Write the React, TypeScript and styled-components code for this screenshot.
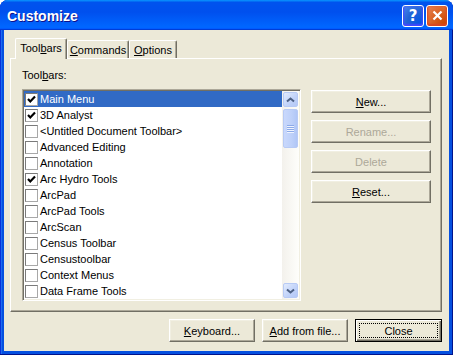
import { createGlobalStyle, styled } from "styled-components";

const Global = createGlobalStyle`
  html, body {
    margin: 0;
    padding: 0;
    background: #ffffff;
  }
  body {
    font-family: "Liberation Sans", Arial, sans-serif;
    font-size: 11px;
    color: #000;
  }
`;

const Window = styled.div`
  width: 453px;
  height: 355px;
  box-sizing: border-box;
  display: flex;
  flex-direction: column;
  background: #0550e0;
  border-radius: 8px 8px 0 0;
  box-shadow: inset -1px -1px #00138c, inset 1px 0 #0831d9, inset 2px 0 #1d6bf0;
  overflow: hidden;
`;

const TitleBar = styled.div`
  height: 30px;
  flex: none;
  display: flex;
  align-items: center;
  justify-content: space-between;
  padding: 0 5px 0 7px;
  background: linear-gradient(
    180deg,
    #0997ff,
    #0053ee 8%,
    #0050ee 40%,
    #0066ff 88%,
    #0066ff 93%,
    #005bff 95%,
    #003dd7 96%,
    #003dd7
  );
`;

const Title = styled.div`
  font-family: "Liberation Sans", Arial, sans-serif;
  font-weight: bold;
  font-size: 14px;
  color: #fff;
  text-shadow: 1px 1px #0f1089;
  padding-top: 1px;
`;

const Caps = styled.div`
  display: flex;
  gap: 2px;
  padding-top: 1px;
`;

const CapButton = styled.div<{ $kind: "help" | "close" }>`
  width: 22px;
  height: 22px;
  box-sizing: border-box;
  border: 1px solid #fff;
  border-radius: 3px;
  display: flex;
  align-items: center;
  justify-content: center;
  color: #fff;
  font-family: "DejaVu Sans", sans-serif;
  font-weight: bold;
  font-size: 15px;
  background: ${(p) =>
    p.$kind === "close"
      ? "radial-gradient(circle at 90% 90%, #cc4600 0%, #dc6527 55%, #e5845a 100%)"
      : "radial-gradient(circle at 90% 90%, #0054e9 0%, #2263d5 55%, #4f87f0 100%)"};
  box-shadow: ${(p) =>
    p.$kind === "close" ? "inset 0 -1px 2px 1px #da4624" : "inset 0 -1px 2px 1px #4646ff"};
`;

const Client = styled.div`
  flex: 1;
  margin: 0 4px 4px 4px;
  background: #ece9d8;
  display: flex;
  flex-direction: column;
  padding: 8px 7px 0 6px;
`;

const TabStrip = styled.div`
  display: flex;
  align-items: flex-end;
  height: 20px;
  padding-left: 5px;
  position: relative;
  z-index: 1;
`;

const Tab = styled.div<{ $active?: boolean; $width: number }>`
  box-sizing: border-box;
  width: ${(p) => p.$width}px;
  height: ${(p) => (p.$active ? "21px" : "18px")};
  margin-bottom: ${(p) => (p.$active ? "-1px" : "0")};
  padding-top: 2px;
  text-align: center;
  background: #ece9d8;
  border-top: 1px solid #fff;
  border-left: 1px solid #fff;
  border-right: 1px solid #716f64;
  border-radius: 2px 2px 0 0;
  box-shadow: inset -1px 0 #aca899;
  line-height: 15px;
  white-space: nowrap;
`;

const Panel = styled.div`
  box-sizing: border-box;
  height: 254px;
  border: 1px solid;
  border-color: #fff #716f64 #716f64 #fff;
  box-shadow: inset -1px -1px #aca899;
  padding: 10px 10px 0 11px;
  display: flex;
  flex-direction: column;
`;

const Label = styled.div`
  line-height: 13px;
  height: 13px;
  margin-bottom: 7px;
`;

const PanelBody = styled.div`
  display: flex;
  gap: 10px;
`;

const ListBox = styled.div`
  box-sizing: border-box;
  width: 279px;
  height: 212px;
  border: 1px solid;
  border-color: #aca899 #fff #fff #aca899;
  box-shadow: inset 1px 1px #716f64, inset -1px -1px #f1efe2;
  padding: 1px;
  display: flex;
  background: #fff;
`;

const Rows = styled.div`
  flex: 1;
  display: flex;
  flex-direction: column;
  background: #fff;
`;

const Row = styled.div<{ $selected?: boolean }>`
  height: 16px;
  display: flex;
  align-items: center;
  gap: 2px;
  padding-left: 1px;
  background: ${(p) => (p.$selected ? "#316ac5" : "transparent")};
  color: ${(p) => (p.$selected ? "#fff" : "#000")};
  white-space: nowrap;
`;

const Check = styled.div`
  width: 13px;
  height: 13px;
  box-sizing: border-box;
  border: 1px solid #7a7a7a;
  border-right-color: #a8a8a8;
  border-bottom-color: #a8a8a8;
  background: #fff;
  display: flex;
  align-items: center;
  justify-content: center;
`;

const ScrollBar = styled.div`
  width: 17px;
  display: flex;
  flex-direction: column;
  background: linear-gradient(90deg, #f3f1ec, #fefefb);
  padding: 1px 0 1px 0;
  box-sizing: border-box;
`;

const ArrowBtn = styled.div`
  height: 15px;
  margin: 0 1px;
  box-sizing: border-box;
  border: 1px solid #b7caf5;
  border-radius: 2px;
  background: linear-gradient(135deg, #e2ebfd, #c0d2f9 60%, #b4c8f6);
  display: flex;
  align-items: center;
  justify-content: center;
`;

const Thumb = styled.div`
  height: 39px;
  margin: 2px 1px 0;
  box-sizing: border-box;
  border: 1px solid #b7caf5;
  border-radius: 2px;
  background: linear-gradient(90deg, #c9d8fc, #bdd0f9 60%, #b0c6f6);
  display: flex;
  flex-direction: column;
  align-items: center;
  justify-content: center;
  gap: 1px;
`;

const Grip = styled.div`
  width: 7px;
  height: 1px;
  background: #8caae8;
  box-shadow: 0 1px #eef3fe;
`;

const Spacer = styled.div`
  flex: 1;
`;

const SideButtons = styled.div`
  display: flex;
  flex-direction: column;
  gap: 7px;
  padding-top: 1px;
`;

const Button = styled.div<{ $width?: number; $disabled?: boolean; $default?: boolean }>`
  position: relative;
  box-sizing: border-box;
  width: ${(p) => p.$width ?? 120}px;
  height: 23px;
  display: flex;
  align-items: center;
  justify-content: center;
  background: #ece9d8;
  color: ${(p) => (p.$disabled ? "#aca899" : "#000")};
  border: 1px solid;
  border-color: ${(p) => (p.$default ? "#000" : "#fff #716f64 #716f64 #fff")};
  box-shadow: ${(p) =>
    p.$default
      ? "inset 1px 1px #fff, inset -1px -1px #716f64, inset -2px -2px #aca899"
      : "inset -1px -1px #aca899, inset 1px 1px #f1efe2"};
  ${(p) =>
    p.$default &&
    `&::after {
      content: "";
      position: absolute;
      inset: 3px;
      border: 1px dotted #000;
    }`}
`;

const Footer = styled.div`
  display: flex;
  justify-content: flex-end;
  gap: 7px;
  margin-top: 7px;
`;

const items: { name: string; checked?: boolean }[] = [
  { name: "Main Menu", checked: true },
  { name: "3D Analyst", checked: true },
  { name: "<Untitled Document Toolbar>" },
  { name: "Advanced Editing" },
  { name: "Annotation" },
  { name: "Arc Hydro Tools", checked: true },
  { name: "ArcPad" },
  { name: "ArcPad Tools" },
  { name: "ArcScan" },
  { name: "Census Toolbar" },
  { name: "Censustoolbar" },
  { name: "Context Menus" },
  { name: "Data Frame Tools" },
];

function Tick() {
  return (
    <svg width="9" height="9" viewBox="0 0 9 9">
      <path d="M1 4 L3.3 6.4 L8 1.6" stroke="#000" strokeWidth="2.2" fill="none" />
    </svg>
  );
}

function Chevron({ down }: { down?: boolean }) {
  return (
    <svg width="9" height="6" viewBox="0 0 9 6">
      <path
        d={down ? "M1 1.5 L4.5 4.5 L8 1.5" : "M1 4.5 L4.5 1.5 L8 4.5"}
        stroke="#4d6185"
        strokeWidth="2"
        fill="none"
      />
    </svg>
  );
}

function App() {
  return (
    <>
      <Global />
      <Window>
        <TitleBar>
          <Title>Customize</Title>
          <Caps>
            <CapButton $kind="help">?</CapButton>
            <CapButton $kind="close">
              <svg width="11" height="11" viewBox="0 0 11 11">
                <path d="M1.5 1.5 L9.5 9.5 M9.5 1.5 L1.5 9.5" stroke="#fff" strokeWidth="2.2" />
              </svg>
            </CapButton>
          </Caps>
        </TitleBar>
        <Client>
          <TabStrip>
            <Tab $active $width={52}>
              Tool<u>b</u>ars
            </Tab>
            <Tab $width={62}>
              <u>C</u>ommands
            </Tab>
            <Tab $width={48}>
              <u>O</u>ptions
            </Tab>
          </TabStrip>
          <Panel>
            <Label>
              Tool<u>b</u>ars:
            </Label>
            <PanelBody>
              <ListBox>
                <Rows>
                  {items.map((it, i) => (
                    <Row key={it.name} $selected={i === 0}>
                      <Check>{it.checked && <Tick />}</Check>
                      {it.name}
                    </Row>
                  ))}
                </Rows>
                <ScrollBar>
                  <ArrowBtn>
                    <Chevron />
                  </ArrowBtn>
                  <Thumb>
                    <Grip />
                    <Grip />
                    <Grip />
                    <Grip />
                  </Thumb>
                  <Spacer />
                  <ArrowBtn>
                    <Chevron down />
                  </ArrowBtn>
                </ScrollBar>
              </ListBox>
              <SideButtons>
                <Button>
                  <span>
                    <u>N</u>ew...
                  </span>
                </Button>
                <Button $disabled>Rename...</Button>
                <Button $disabled>Delete</Button>
                <Button>
                  <span>
                    <u>R</u>eset...
                  </span>
                </Button>
              </SideButtons>
            </PanelBody>
          </Panel>
          <Footer>
            <Button $width={86}>
              <span>
                <u>K</u>eyboard...
              </span>
            </Button>
            <Button $width={86}>
              <span>
                <u>A</u>dd from file...
              </span>
            </Button>
            <Button $width={87} $default>
              Close
            </Button>
          </Footer>
        </Client>
      </Window>
    </>
  );
}

export default App;
